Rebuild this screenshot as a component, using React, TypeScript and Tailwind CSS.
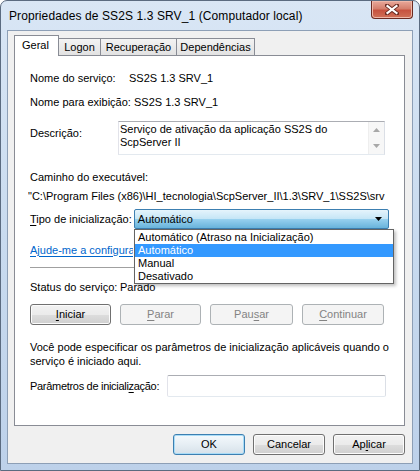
import React from "react";

function U({ c }: { c: string }) {
  return <span className="underline underline-offset-[2px]">{c}</span>;
}

function WinButton({
  children,
  disabled,
  primary,
  w,
}: {
  children: React.ReactNode;
  disabled?: boolean;
  primary?: boolean;
  w: string;
}) {
  if (disabled) {
    return (
      <div className={`${w} h-[21px] flex items-center justify-center rounded-[3px] border border-[#adb2b5] bg-[#f4f4f4] text-[#838383]`}>
        {children}
      </div>
    );
  }
  if (primary) {
    return (
      <div className={`${w} h-[21px] flex items-center justify-center rounded-[3px] border border-[#3c7fb1] bg-gradient-to-b from-[#f4f9fc] via-[#e6eef4] to-[#d6e1e9] shadow-[inset_0_0_0_1px_#a9dcf7] text-black`}>
        {children}
      </div>
    );
  }
  return (
    <div className={`${w} h-[21px] flex items-center justify-center rounded-[3px] border border-[#707070] bg-[linear-gradient(#f2f2f2_0%,#ebebeb_50%,#dddddd_51%,#cfcfcf_100%)] shadow-[inset_0_0_0_1px_#fcfcfc] text-black`}>
      {children}
    </div>
  );
}

export default function App() {
  return (
    <div className="w-[420px] h-[471px] flex flex-col rounded-t-[7px] border border-[#5b6b80] bg-gradient-to-b from-[#d9e6f5] via-[#c9dbef] to-[#bdd1ea] px-[6px] pb-[6px] font-['Liberation_Sans',Arial,sans-serif] text-[11px] text-black">
      {/* title bar */}
      <div className="h-[29px] flex items-start justify-between">
        <p className="pl-[2px] pt-[7px] text-[12px] leading-[16px] tracking-[0.1px] text-black">
          Propriedades de SS2S 1.3 SRV_1 (Computador local)
        </p>
        <div className="w-[42px] h-[18px] flex items-center justify-center rounded-b-[4px] border border-t-0 border-[#6b2a22] bg-[linear-gradient(#e9a99b_0%,#d47f6d_45%,#c7523f_55%,#d07158_100%)] shadow-[inset_0_0_0_1px_#efb8a9]">
          <svg width="14" height="11" viewBox="0 0 14 11">
            <path d="M2 1.5 L12 9.5 M12 1.5 L2 9.5" stroke="#6a2b22" strokeWidth="4" strokeLinecap="square" />
            <path d="M2.5 2 L11.5 9 M11.5 2 L2.5 9" stroke="#ffffff" strokeWidth="2.2" strokeLinecap="square" />
          </svg>
        </div>
      </div>

      {/* client area */}
      <div className="flex-1 flex flex-col border border-[#8d9fb6] bg-[#f0f0f0] pl-[6px] pt-[4px]">
        {/* tabs */}
        <div className="h-[20px] flex items-end">
          <div className="relative z-10 -mb-[1px] w-[45px] h-[21px] border border-b-0 border-[#898c95] bg-white pl-[7px] pt-[2px] leading-[14px]">
            Geral
          </div>
          <div className="-ml-[1px] w-[43px] h-[17px] border border-b-0 border-[#898c95] bg-gradient-to-b from-[#f3f3f3] to-[#e2e2e2] text-center leading-[17px]">
            Logon
          </div>
          <div className="-ml-[1px] w-[77px] h-[17px] border border-b-0 border-[#898c95] bg-gradient-to-b from-[#f3f3f3] to-[#e2e2e2] text-center leading-[17px]">
            Recuperação
          </div>
          <div className="-ml-[1px] w-[79px] h-[17px] border border-b-0 border-[#898c95] bg-gradient-to-b from-[#f3f3f3] to-[#e2e2e2] text-center leading-[17px]">
            Dependências
          </div>
        </div>

        {/* panel */}
        <div className="relative w-[391px] h-[371px] border border-[#898c95] bg-white px-[15px] flex flex-col">
          <div className="mt-[14px] h-[16px] flex items-center">
            <span className="w-[99px]">Nome do serviço:</span>
            <span>SS2S 1.3 SRV_1</span>
          </div>
          <div className="mt-[8px] h-[16px] flex items-center">
            <span className="w-[104px]">Nome para exibição:</span>
            <span>SS2S 1.3 SRV_1</span>
          </div>
          <div className="mt-[11px] h-[34px] flex items-start">
            <span className="w-[88px] pt-[4px] leading-[16px]">Descrição:</span>
            <div className="w-[267px] h-[34px] flex border border-[#abadb3] border-l-[#e2e3ea] border-r-[#dbdfe6] border-b-[#e3e9ef] bg-white">
              <p className="flex-1 pl-[1px] pt-[1px] leading-[13px]">
                Serviço de ativação da aplicação SS2S do ScpServer II
              </p>
              <div className="w-[16px] flex flex-col items-center justify-between border-l border-[#eeeeee] bg-[#f7f7f7] py-[6px]">
                <svg width="7" height="4" viewBox="0 0 7 4">
                  <path d="M0 4 L3.5 0 L7 4 Z" fill="#a8a8a8" />
                </svg>
                <svg width="7" height="4" viewBox="0 0 7 4">
                  <path d="M0 0 L3.5 4 L7 0 Z" fill="#a8a8a8" />
                </svg>
              </div>
            </div>
          </div>
          <div className="mt-[14px] h-[16px] flex items-center">Caminho do executável:</div>
          <div className="mt-[3px] h-[16px] w-[357px] -ml-[2px] overflow-hidden whitespace-nowrap leading-[16px]">
            "C:\Program Files (x86)\HI_tecnologia\ScpServer_II\1.3\SRV_1\SS2S\srv
          </div>
          <div className="mt-[5px] h-[20px] flex items-center">
            <span className="w-[105px] whitespace-nowrap">
              <U c="T" />ipo de inicialização:
            </span>
            <div className="w-[258px] h-[20px] flex items-center justify-between rounded-[2px] border border-[#3c7fb1] bg-[linear-gradient(#e5f4fc_0%,#c4e5f6_50%,#98d1ef_51%,#68b3db_100%)] pl-[3px] pr-[6px]">
              <span>Automático</span>
              <svg width="7" height="4" viewBox="0 0 7 4">
                <path d="M0 0 L7 0 L3.5 4 Z" fill="#000000" />
              </svg>
            </div>
          </div>
          <div className="mt-[13px] h-[16px] w-[103px] overflow-hidden flex items-center whitespace-nowrap">
            <span className="text-[#0066cc] underline underline-offset-[2px]">
              Ajude-me a configurar as opções de inicialização de serviço.
            </span>
          </div>
          <div className="mt-[9px] w-[358px] border-t border-[#a0a0a0]" />
          <div className="mt-[11px] h-[16px] flex items-center">
            <span className="w-[90px]">Status do serviço:</span>
            <span>Parado</span>
          </div>
          <div className="mt-[9px] flex gap-[9px]">
            <WinButton w="w-[81px]">
              <span>
                <U c="I" />niciar
              </span>
            </WinButton>
            <WinButton w="w-[81px]" disabled>
              <span>
                <U c="P" />arar
              </span>
            </WinButton>
            <WinButton w="w-[83px]" disabled>
              <span>
                Pau<U c="s" />ar
              </span>
            </WinButton>
            <WinButton w="w-[82px]" disabled>
              <span>
                <U c="C" />ontinuar
              </span>
            </WinButton>
          </div>
          <p className="mt-[15px] w-[360px] leading-[14px]">
            Você pode especificar os parâmetros de inicialização aplicáveis quando o serviço é iniciado aqui.
          </p>
          <div className="mt-[7px] h-[22px] flex items-center">
            <span className="w-[137px] whitespace-nowrap tracking-[-0.3px]">
              Parâmetros de iniciali<U c="z" />ação:
            </span>
            <div className="w-[219px] h-[22px] rounded-[2px] border border-[#abadb3] border-l-[#e2e3ea] border-r-[#dbdfe6] border-b-[#e3e9ef] bg-white" />
          </div>

          {/* open dropdown list */}
          <div className="absolute left-[119px] top-[173px] w-[260px] h-[55px] border border-[#646464] bg-white py-[1px] shadow-[2px_2px_3px_rgba(0,0,0,0.25)] leading-[13px]">
            <div className="h-[13px] pl-[3px]">Automático (Atraso na Inicialização)</div>
            <div className="h-[13px] pl-[3px] bg-[#3399ff] text-white">Automático</div>
            <div className="h-[13px] pl-[3px]">Manual</div>
            <div className="h-[13px] pl-[3px]">Desativado</div>
          </div>
        </div>

        {/* dialog buttons */}
        <div className="mt-[8px] w-[391px] flex justify-end gap-[8px]">
          <WinButton w="w-[72px]" primary>
            OK
          </WinButton>
          <WinButton w="w-[72px]">Cancelar</WinButton>
          <WinButton w="w-[72px]">
            <span>
              Ap<U c="l" />icar
            </span>
          </WinButton>
        </div>
      </div>
    </div>
  );
}
